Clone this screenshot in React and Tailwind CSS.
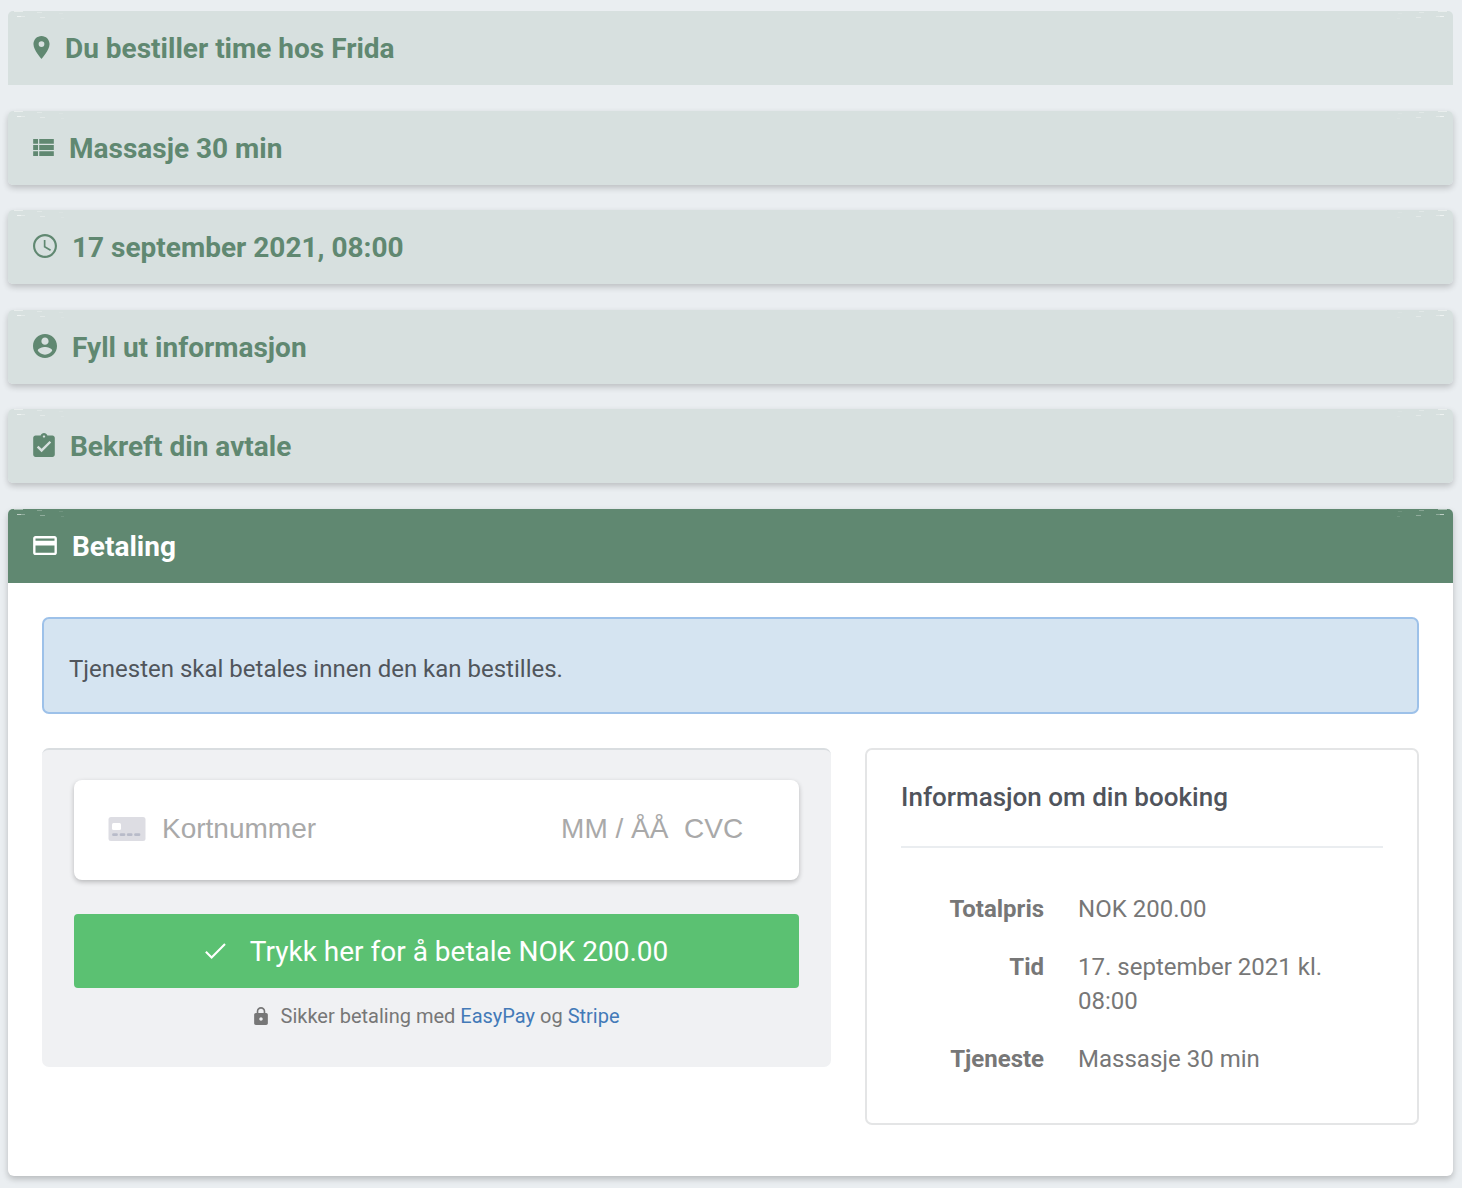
const icons = {
  place: {
    box: "5 2 14 20",
    size: "w-[17px] h-[23px]",
    d: "M12 2C8.13 2 5 5.13 5 9c0 5.25 7 13 7 13s7-7.75 7-13c0-3.87-3.13-7-7-7zm0 9.5a2.5 2.5 0 0 1 0-5 2.5 2.5 0 0 1 0 5z",
  },
  list: {
    box: "4 5 17 14",
    size: "w-[21px] h-[17px]",
    d: "M4 14h4v-4H4v4zm0 5h4v-4H4v4zM4 9h4V5H4v4zm5 5h12v-4H9v4zm0 5h12v-4H9v4zM9 5v4h12V5H9z",
  },
  clock: {
    box: "2 2 20 20",
    size: "size-6",
    d: "M11.99 2C6.47 2 2 6.48 2 12s4.47 10 9.99 10C17.52 22 22 17.52 22 12S17.52 2 11.99 2zM12 20.2c-4.53 0-8.2-3.67-8.2-8.2s3.67-8.2 8.2-8.2 8.2 3.67 8.2 8.2-3.67 8.2-8.2 8.2zM12.4 7h-1.4v6l5.25 3.15.75-1.23-4.6-2.67z",
  },
  account: {
    box: "2 2 20 20",
    size: "size-6",
    d: "M12 2C6.48 2 2 6.48 2 12s4.48 10 10 10 10-4.48 10-10S17.52 2 12 2zm0 3c1.66 0 3 1.34 3 3s-1.34 3-3 3-3-1.34-3-3 1.34-3 3-3zm0 14.2c-2.5 0-4.71-1.28-6-3.22.03-1.99 4-3.08 6-3.08 1.99 0 5.97 1.09 6 3.08-1.29 1.94-3.5 3.22-6 3.22z",
  },
  confirm: {
    box: "3 1 18 20",
    size: "w-[22px] h-6",
    d: "M19 3h-4.18C14.4 1.84 13.3 1 12 1c-1.3 0-2.4.84-2.82 2H5c-1.1 0-2 .9-2 2v14c0 1.1.9 2 2 2h14c1.1 0 2-.9 2-2V5c0-1.1-.9-2-2-2zm-7 0c.55 0 1 .45 1 1s-.45 1-1 1-1-.45-1-1 .45-1 1-1zm-2 14l-4-4 1.41-1.41L10 14.17l6.59-6.59L18 9l-8 8z",
  },
  card: {
    box: "2 4 20 16",
    size: "w-6 h-[19px]",
    d: "M20 4H4c-1.11 0-1.99.89-1.99 2L2 18c0 1.11.89 2 2 2h16c1.11 0 2-.89 2-2V6c0-1.11-.89-2-2-2zm0 14H4v-6h16v6zm0-10H4V6h16v2z",
  },
  lock: {
    box: "4 1 16 21",
    size: "w-[14px] h-[18px]",
    d: "M18 8h-1V6c0-2.76-2.24-5-5-5S7 3.24 7 6v2H6c-1.1 0-2 .9-2 2v10c0 1.1.9 2 2 2h12c1.1 0 2-.9 2-2V10c0-1.1-.9-2-2-2zm-6 9c-1.1 0-2-.9-2-2s.9-2 2-2 2 .9 2 2-.9 2-2 2zm3.1-9H8.9V6c0-1.71 1.39-3.1 3.1-3.1 1.71 0 3.1 1.39 3.1 3.1v2z",
  },
  check: {
    box: "3.4 5.2 17.9 13.8",
    size: "w-[21px] h-4",
    d: "M9 16.4L4.7 12.1l-1.3 1.3L9 19 21.2 6.8l-1.3-1.3z",
  },
};

function Icon({ name }) {
  const { box, size, d } = icons[name];
  return (
    <svg viewBox={box} className={`${size} shrink-0 fill-current`} aria-hidden="true">
      <path d={d} />
    </svg>
  );
}

// Faint ripple highlights in the top corners of each header.
function Ripple({ className }) {
  return (
    <svg viewBox="0 0 60 10" className={`absolute top-0 h-[10px] w-[60px] fill-white ${className}`} aria-hidden="true">
      <rect x="6" y="0" width="9" height="1" opacity=".45" />
      <rect x="9" y="5" width="4" height="1" opacity=".6" />
      <rect x="13" y="5" width="4" height="1" opacity=".3" />
      <rect x="29" y="1" width="5" height="1" opacity=".25" />
      <rect x="32" y="6" width="5" height="1" opacity=".3" />
      <rect x="51" y="2" width="4" height="1" opacity=".1" />
      <rect x="53" y="7" width="3" height="1" opacity=".1" />
    </svg>
  );
}

function StepHeader({ icon, children, className }) {
  return (
    <h2 className={`relative flex h-[74px] items-center gap-[15px] pb-[2px] pl-[25px] text-[28px] font-bold ${className}`}>
      <Ripple className="left-0" />
      <Ripple className="right-0 -scale-x-100" />
      <Icon name={icon} />
      <span className="pt-1">{children}</span>
    </h2>
  );
}

const steps = [
  { icon: "place", label: "Du bestiller time hos Frida" },
  { icon: "list", label: "Massasje 30 min" },
  { icon: "clock", label: "17 september 2021, 08:00" },
  { icon: "account", label: "Fyll ut informasjon" },
  { icon: "confirm", label: "Bekreft din avtale" },
];

const details = [
  ["Totalpris", "NOK 200.00"],
  ["Tid", "17. september 2021 kl. 08:00"],
  ["Tjeneste", "Massasje 30 min"],
];

const field = "bg-transparent text-[28px] leading-9 text-[#32325d] outline-none placeholder:text-[#a9a9a9]";

function CardField() {
  return (
    <div className="flex h-[100px] items-center rounded-lg bg-white pr-[54px] pb-[2px] pl-[34px] font-['Liberation_Sans',Arial,sans-serif] shadow-[0_2px_5px_rgba(0,0,0,0.24)]">
      <svg viewBox="0 0 38 26" className="mr-4 h-[26px] w-[38px] shrink-0" aria-hidden="true">
        <rect x="0.5" y="1" width="37" height="24" rx="2.5" fill="#dddde3" />
        <rect x="4" y="7" width="9" height="7" rx="1.5" fill="#fff" />
        <path d="M5.5 18.7h3M13 18.7h3M20.2 18.7h3M27.5 18.7h3.5" stroke="#b8bbc9" strokeWidth="2.8" strokeLinecap="round" />
      </svg>
      <input aria-label="Kortnummer" placeholder="Kortnummer" className={`min-w-0 flex-1 ${field}`} />
      <input aria-label="Utløpsdato" placeholder="MM / ÅÅ" className={`w-[123px] ${field}`} />
      <input aria-label="CVC" placeholder="CVC" className={`w-[61px] ${field}`} />
    </div>
  );
}

export default function App() {
  return (
    <main className="min-h-screen bg-[#eaeef1] pt-[11px] pr-[9px] pb-3 pl-2 font-[Roboto,sans-serif]">
      {steps.map(({ icon, label }) => (
        <section
          key={icon}
          className="mb-[26px] rounded-[5px] shadow-[0_3px_6px_rgba(0,0,0,0.2)] first:rounded-b-none first:shadow-none even:mb-[25px]"
        >
          <StepHeader icon={icon} className="rounded-[inherit] bg-[#d7e0df] text-[#608871]">
            {label}
          </StepHeader>
        </section>
      ))}

      <section className="rounded-md bg-white shadow-[0_3px_6px_rgba(0,0,0,0.22)]">
        <StepHeader icon="card" className="rounded-t-[5px] bg-[#608871] text-white">
          Betaling
        </StepHeader>

        <div className="px-[34px] pt-[34px] pb-[51px]">
          <p className="mb-[34px] rounded-[7px] border-2 border-[#9dc1e9] bg-[#d5e4f1] px-[25px] pt-[33px] pb-[26px] text-[24px] leading-[34px] text-[#50555c]">
            Tjenesten skal betales innen den kan bestilles.
          </p>

          <div className="grid grid-cols-12 items-start gap-x-[34px]">
            <form className="col-span-7 rounded-[7px] border-t-2 border-[#d9dde0] bg-[#f0f1f3] px-8 pt-[30px] pb-9" onSubmit={(e) => e.preventDefault()}>
              <CardField />
              <button type="submit" className="mt-[34px] flex h-[74px] w-full items-center justify-center gap-6 rounded bg-[#5bc172] text-[28px] text-white">
                <Icon name="check" />
                <span className="pt-[2px]">Trykk her for å betale NOK 200.00</span>
              </button>
              <p className="mt-[13px] flex items-center justify-center gap-[13px] text-[20px] leading-[30px] text-[#777]">
                <Icon name="lock" />
                <span>
                  Sikker betaling med <a href="#easypay" className="text-[#437ab8]">EasyPay</a> og{" "}
                  <a href="#stripe" className="text-[#437ab8]">Stripe</a>
                </span>
              </p>
            </form>

            <aside className="col-span-5 rounded-[7px] border-2 border-[#e4e5e6] px-[34px] pt-[30px] pb-[47px]">
              <h3 className="border-b-2 border-[#eaedf0] pb-8 text-[26px] leading-[34px] font-medium text-[#50545c]">
                Informasjon om din booking
              </h3>
              <dl className="mt-11 grid grid-cols-[143px_1fr] gap-x-[34px] gap-y-6 text-[24px] leading-[34px] text-[#777]">
                {details.map(([term, value]) => (
                  <div key={term} className="contents">
                    <dt className="text-right font-bold">{term}</dt>
                    <dd>{value}</dd>
                  </div>
                ))}
              </dl>
            </aside>
          </div>
        </div>
      </section>
    </main>
  );
}
